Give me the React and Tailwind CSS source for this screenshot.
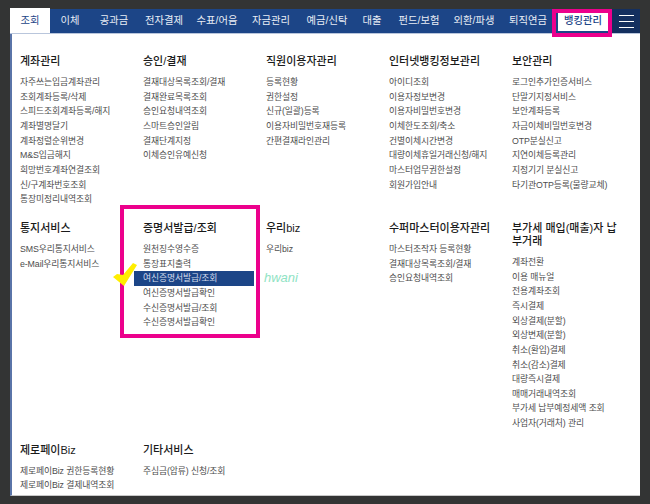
const tabs = [
  ["조회", "w-[40px]"],
  ["이체", "w-[40px]"],
  ["공과금", "w-[48px]"],
  ["전자결제", "w-[52px]"],
  ["수표/어음", "w-[54px]"],
  ["자금관리", "w-[54px]"],
  ["예금/신탁", "w-[58px]"],
  ["대출", "w-[32px]"],
  ["펀드/보험", "w-[62px]"],
  ["외환/파생", "w-[48px]"],
  ["퇴직연금", "w-[60px]"],
];

const rows = [
  [
    ["계좌관리", ["자주쓰는입금계좌관리", "조회계좌등록/삭제", "스피드조회계좌등록/해지", "계좌별명달기", "계좌정렬순위변경", "M&S입금해지", "희망번호계좌연결조회", "신/구계좌번호조회", "통장미정리내역조회"]],
    ["승인/결재", ["결재대상목록조회/결재", "결재완료목록조회", "승인요청내역조회", "스마트승인알림", "결재단계지정", "이체승인유예신청"]],
    ["직원이용자관리", ["등록현황", "권한설정", "신규(일괄)등록", "이용자비밀번호재등록", "간편결재라인관리"]],
    ["인터넷뱅킹정보관리", ["아이디조회", "이용자정보변경", "이용자비밀번호변경", "이체한도조회/축소", "건별이체시간변경", "대량이체휴일거래신청/해지", "마스터업무권한설정", "회원가입안내"]],
    ["보안관리", ["로그인추가인증서비스", "단말기지정서비스", "보안계좌등록", "자금이체비밀번호변경", "OTP분실신고", "지연이체등록관리", "지정기기 분실신고", "타기관OTP등록(물량교체)"]],
  ],
  [
    ["통지서비스", ["SMS우리통지서비스", "e-Mail우리통지서비스"]],
    ["증명서발급/조회", ["원천징수영수증", "통장표지출력", "여신증명서발급/조회", "여신증명서발급확인", "수신증명서발급/조회", "수신증명서발급확인"]],
    ["우리biz", ["우리biz"]],
    ["수퍼마스터이용자관리", ["마스터조작자 등록현황", "결재대상목록조회/결재", "승인요청내역조회"]],
    ["부가세 매입(매출)자 납부거래", ["계좌전환", "이용 매뉴얼", "전용계좌조회", "즉시결제", "외상결제(분할)", "외상변제(분할)", "취소(환입)결제", "취소(감소)결제", "대량즉시결제", "매매거래내역조회", "부가세 납부예정세액 조회", "사업자(거래처) 관리"]],
  ],
  [
    ["제로페이Biz", ["제로페이Biz 권한등록현황", "제로페이Biz 결제내역조회"]],
    ["기타서비스", ["주심금(압류) 신청/조회"]],
  ],
];

const FONT = "font-['Liberation_Sans','Noto_Sans_CJK_KR',sans-serif]";

function Column({ title, items }) {
  return (
    <div className="w-[123px] shrink-0">
      <h3 className="w-[110px] text-[11px] leading-[13px] font-medium text-[#1a1a1a] mb-[7px]">{title}</h3>
      <ul>
        {items.map((item) => (
          <li
            key={item}
            className={
              item === "여신증명서발급/조회"
                ? "h-[14.67px] leading-[14.67px] text-[8.8px] tracking-[-0.1px] whitespace-nowrap -ml-[9px] pl-[9px] w-[120px] bg-[#1c4587] text-[#d5dded]"
                : "h-[14.67px] leading-[14.67px] text-[8.8px] tracking-[-0.1px] whitespace-nowrap text-[#4d4d4d]"
            }
          >
            {item}
          </li>
        ))}
      </ul>
    </div>
  );
}

export default function App() {
  return (
    <div className={`relative w-[650px] h-[504px] overflow-hidden bg-[#333434] pt-[9px] pl-[10px] ${FONT}`}>
      <div className="w-[630px]">
        <nav className="flex h-[25px] bg-[#1c4587] border-b border-[#b9c6dc]">
          {tabs.map(([label, width], i) => (
            <div
              key={label}
              className={
                i === 0
                  ? `${width} -mt-px h-[25px] flex items-center justify-center text-[10.3px] text-[#1c4587] bg-white`
                  : `${width} flex items-center justify-center text-[10.3px] text-[#e8edf5]`
              }
            >
              {label}
            </div>
          ))}
          <div className="w-[50px] mt-[1px] mb-[1px] h-[21px] flex items-center justify-center bg-white text-[10.3px] font-medium text-[#1c4587]">
            뱅킹관리
          </div>
          <div className="w-[4px]" />
          <div className="w-[28px] flex flex-col items-center justify-center gap-[5px] bg-[#142f5f]">
            <span className="block w-[15px] h-px bg-white" />
            <span className="block w-[15px] h-px bg-white" />
            <span className="block w-[15px] h-px bg-white" />
          </div>
        </nav>
        <main className="bg-white border-l-2 border-l-[#5a74a8] border-b border-b-[#c8c8c8] pl-[8px] pt-[21px] pb-[2px]">
          {rows.map((row, r) => (
            <div key={r} className={r === 0 ? "flex" : r === 1 ? "flex mt-[15px]" : "flex mt-[13px]"}>
              {row.map(([title, items]) => (
                <Column key={title} title={title} items={items} />
              ))}
            </div>
          ))}
        </main>
      </div>

      <div className="absolute left-[120px] top-[205px] w-[140px] h-[133px] border-[4.5px] border-[#ec008c]" />
      <div className="absolute left-[552px] top-[9px] w-[60px] h-[28px] border-[4px] border-[#ec008c]" />
      <div className="absolute left-[264px] top-[270px] text-[13px] leading-[16px] italic text-[#8fe3c4] font-['Liberation_Sans',sans-serif]">
        hwani
      </div>
      <svg className="absolute left-[112px] top-[262px]" width="26" height="26" viewBox="0 0 26 26">
        <path d="M1 15 L5 12 L11 13 L21 1 L25 3 L12 24 Z" fill="#ffee00" />
      </svg>
    </div>
  );
}
